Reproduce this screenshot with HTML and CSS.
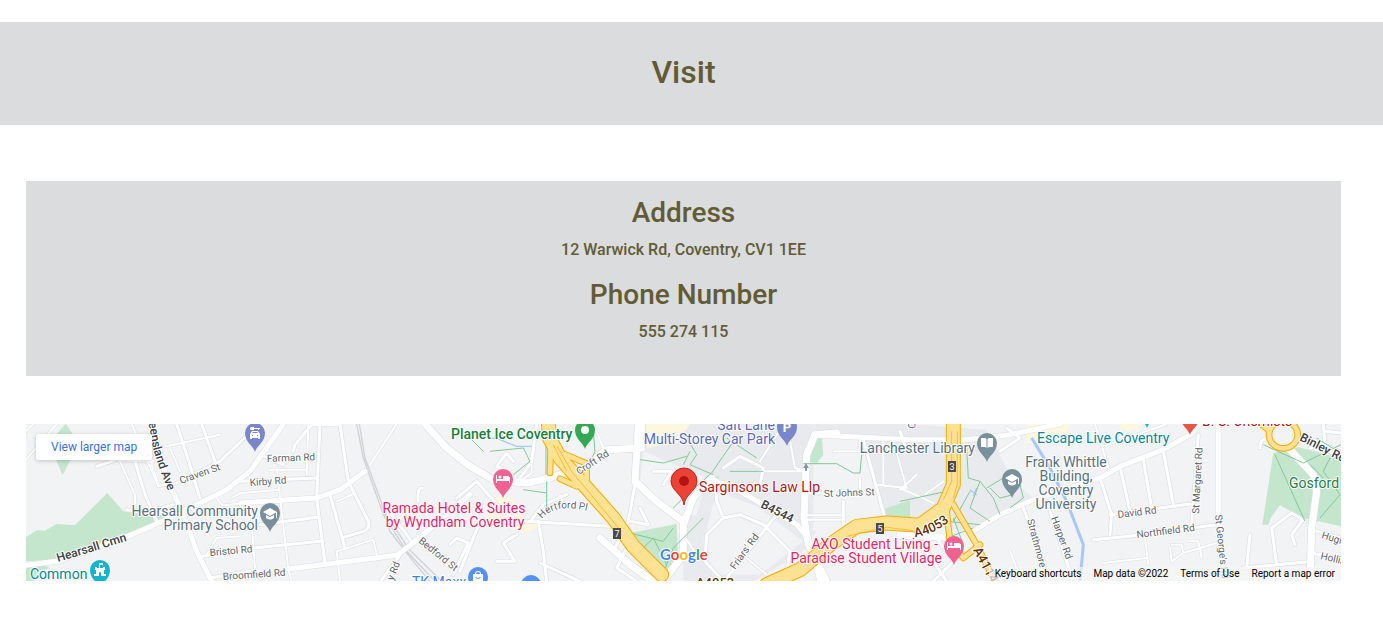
FILE: index.html
```html
<!DOCTYPE html>
<html lang="en">
<head>
<meta charset="utf-8">
<title>Visit</title>
<link rel="stylesheet" href="styles.css">
</head>
<body>
<header class="banner"><h1>Visit</h1></header>
<main class="content">
<section class="contact">
<h2>Address</h2>
<p>12 Warwick Rd, Coventry, CV1 1EE</p>
<h2>Phone Number</h2>
<p>555 274 115</p>
</section>
<section class="map" aria-label="Map">
<svg class="map-canvas" viewBox="0 0 1315 157" preserveAspectRatio="xMidYMid slice">
<defs>
<g id="thin">
<path d="M18 125L110 18M18 40L40 18M335 18L415 205M415 90L600 50M300 130L345 230V275M415 205L470 195M590 240L605 262L690 255M560 410L590 360L660 355M635 240L660 226M395 90V140L415 200M450 90L480 160"/>
<path d="M770 150L805 453L815 490M745 155H860M865 20L860 170M660 226L780 215M695 320L705 450M950 400L1060 365L1070 410M950 400L960 490M1050 140L1130 18M950 250L1000 228"/>
<path d="M1535 110V165L1500 190M1725 30L1750 90M1620 230L1630 260M2310 70L2325 150L2350 157M2220 130L2280 35M2360 292H2470M2360 305H2470M2570 200L2660 210L2620 70M2440 100H2520V65M2520 180V215M2590 65V200M2220 160H2350"/>
<path d="M2715 230L2770 190M2640 215L2690 170M2970 400L2990 450M3225 18L3270 165M3450 390L3455 430L3490 405L3590 375M3455 380H3485L3490 405M3505 370H3535L3545 420M3250 435L3380 420M3375 360L3385 440M2640 210L2740 255M1990 350L2030 410M2180 420L2240 470M3250 85L3440 18"/>
</g>
<g id="minor">
<path d="M345 130L375 230L410 310M320 275L380 285L460 260M230 145L290 125L400 130M470 18L500 110L540 240M545 18L585 130M470 195L600 130L690 45M550 415L690 385M570 480L690 460M660 190L890 180"/>
<path d="M900 18L890 240L915 435M820 100L825 80L875 20H960L985 190L1045 310Q1053 330 1030 340L970 358M930 230L975 390M720 110L790 140M720 320L890 298M700 390L900 370M1115 290L1175 370M1195 250Q1190 210 1207 210M1300 470L1345 375L1310 360L1290 380M1085 485L1140 412"/>
<path d="M1370 190L1440 270L1490 308L1770 325M1535 305L1570 260L1640 230M1370 190L1310 240M1555 310L1570 400L1580 490M1560 435L1680 490M1380 310L1320 460M1430 430L1485 430L1450 375L1490 350M1845 200L1825 310L1780 400M1900 160H1955L1930 200M1860 270L1885 320L1830 310M1820 390L1790 450L1850 490M1460 160L1430 145L1460 105L1480 130M1550 18L1535 130L1500 180"/>
<path d="M2120 480L2270 290M2085 190L2090 250L2110 300L2060 350L2055 430L2110 490M2110 300L2160 290L2230 320L2310 400L2300 460L2250 490M2110 150L2160 115L2230 150L2220 200M2470 320V250M2530 65L2592 290M2640 40L2660 95M2350 225H2410"/>
<path d="M3010 270L3070 430L3080 490M3090 280L3150 460M3240 180L3275 290L3270 350M3220 365L3330 355M3300 145L3330 280M3370 125L3395 270M3430 100L3460 260M3270 290L3510 258M3535 50L3515 320M3300 358L3590 320M3690 350L3680 450M3670 450L3880 430M3855 310L3815 285L3755 330L3770 440M3845 310L3815 350L3825 380M3875 335L3963 360M3875 405L3963 425M3910 18L3915 80L3870 90M3915 40L3963 45M3720 90Q3720 50 3760 70"/>
<path d="M2740 490L2800 430L2750 360M2720 400L2780 490M2940 100L3000 60L2960 30"/>
</g>
<g id="major">
<path d="M18 442L110 430L300 365L400 322L480 285L540 255L620 215L690 160L790 18M395 18L440 180L490 290L530 400L575 490M660 255L890 240L960 215L1035 160M805 453L1130 412L1180 375L1350 230"/>
<path d="M2080 185L2160 220L2240 265L2330 320L2365 360L2400 490M2380 50L2670 65L2840 65L2970 50L3120 18M2860 340L2940 290L3040 245L3240 180L3300 145L3430 95L3510 50L3540 18M3595 18V300L3615 490"/>
</g>
<g id="arterial">
<path d="M1215 18L1280 90L1350 145L1420 185L1520 195L1590 180L1700 140L1760 95L1865 90V18M1855 18L1845 190L1910 250L1990 310V410L1930 490M1990 320L2020 240L2075 180M2450 45L2385 50L2360 110L2352 300L2365 380L2420 490M3810 95L3880 170L3890 220L3875 330L3870 490M3830 50L3963 110M1740 360L1830 440L1900 490M2640 352L2780 358"/>
</g>
<g id="trunk"><path d="M1585 10L1588 60L1620 120L1700 210L1780 300L1840 385L1925 470M2240 500L2340 455L2430 380L2510 325L2600 315L2700 322L2770 270L2800 200V10"/></g>
<g id="ramp"><path d="M1592 90L1590 165M1625 105L1700 137L1700 200M1620 182L1670 205M2800 260L2870 380L2930 500M2780 280L2790 370L2830 420M2880 380L2830 420"/><ellipse cx="3790" cy="50" rx="43" ry="41"/><path d="M3700 0L3748 38"/></g>
<path id="queensland" d="M120-16L127 24Q134 48 146 76"/>
<path id="hertford" d="M516 95Q528 78 566 88"/>
<path id="ring-road" d="M889 113Q910 110 926 95"/>
<path id="pin" d="M0 19C-1.500 13-10 9-10 0A10 10 0 0 1 10 0C10 9 1.500 13 0 19Z"/>
<g id="cap"><path d="M-7-1L0-5L7-1L0 3ZM-4 2L0 4L4 2V5Q0 8-4 5Z"/><path d="M6-1H7V5H6Z"/></g>
<g id="bed"><path d="M-7-4H-6V1H6V-2Q6-3 5-3H0V0H-6V4H-7ZM6-2H7V4H6ZM-6 1H6V2H-6Z"/><circle cx="-3" cy="-2" r="1.500"/></g>
</defs>
<g transform="translate(-6 -6) scale(.33333)">
<path class="urban" d="M1870 18H2660L2900 35L2980 190L3040 240L2850 340L2660 310L2400 325L2350 400L2200 490H1990V320L1850 190Z"/>
<path class="base" d="M1870 100L2060 180L2030 290L1980 300L1860 190ZM2090 220L2210 265L2350 370L2220 470H2080L2050 370ZM2380 60H2520L2590 290L2470 320L2380 340Z"/>
<path class="sand" d="M1410 235L1480 240L1490 285L1575 320L1510 345L1400 305ZM1870 18H2010L1970 75L1880 90ZM3020 18H3150L3130 65L3020 75ZM3300 18H3370L3330 40L3300 35Z"/>
<path class="park" d="M18 430V358L50 337L75 338L110 318L165 322L262 225L310 280L420 290L450 300L300 365L110 425ZM85 75L137 18L178 75L128 170ZM18 445L65 440L90 450L55 460L40 489H18ZM1830 345L1970 318L1975 430L1930 465ZM2060 175L2100 175L2085 195L2055 195ZM2375 70L2405 55L2410 110L2390 137L2368 130ZM2595 272L2670 247V305L2600 300ZM3760 105L3835 88L3963 120V325L3850 300L3780 262L3752 300L3745 320H3727Z"/>
<path class="river" d="M3035 60L3090 150L3140 250L3190 380L3180 490"/>
<path class="stream" d="M1350 45L1440 65L1490 85L1540 85M2850 215L2870 230M2860 235L2870 210"/>
<path class="rail" d="M1010 18L1030 120L1090 290L1160 400L1245 490M1018 18L1035 120L1098 290L1168 395L1265 490M1085 260L1110 340L1180 430L1230 490"/>
<g class="casing"><use href="#thin" stroke-width="9"/><use href="#minor" stroke-width="13"/><use href="#major" stroke-width="18"/><use href="#arterial" stroke-width="25"/></g>
<g class="surface"><use href="#thin" stroke-width="6"/><use href="#minor" stroke-width="9"/><use href="#major" stroke-width="15"/><use href="#arterial" stroke-width="21"/></g>
<g class="paths"><path d="M1578 60L1578 170M1410 100L1510 90L1530 130L1480 170M1580 190V275M1720 40L1725 100L1710 135M1860 125L1930 135L2000 115M1960 270L1990 240L2075 165L2140 70M2000 60L2030 110L2010 140L2080 170M2010 100L1990 140M2120 60L2210 120M2130 160H2230M2350 137H2450L2500 165H2520L2525 110M1830 345L1930 370L1960 330M1870 390L1900 360L1940 440M1930 465L1960 390L2050 300M1350 60L1390 100M1510 215L1580 225"/><path d="M2840 90L2845 180L2880 190L2920 240L2940 290M2880 190L2850 270L2910 310M2900 210L2950 180L3000 200L3010 240L2970 270M2910 210L2940 240L2980 230M2640 250L2780 220M2780 310L2880 320M2780 360L2860 330M2800 300L2830 380M2850 220L2800 310M3730 80L3850 135L3963 80M3765 110L3855 310M3960 105L3890 60M3930 120L3910 160L3960 230L3900 300M3870 140L3910 180"/></g>
<g class="orange"><use href="#trunk" stroke-width="45"/><use href="#ramp" stroke-width="20"/></g>
<g class="yellow"><use href="#trunk" stroke-width="39"/><use href="#ramp" stroke-width="14"/></g>
<path class="lane" d="M1612 85L1655 160L1800 335M1600 80L1640 160M2480 355L2600 328L2680 338M2795 40V190L2770 245M2812 40V200L2800 240"/>
</g>
<g class="shield"><rect x="587" y="104" width="8" height="11"/><rect x="850" y="99" width="8" height="11"/><rect x="922" y="37" width="8" height="11"/><text x="591" y="113">7</text><text x="854" y="108">5</text><text x="926" y="46">3</text></g>
<g class="street">
<text class="strong"><textPath href="#queensland">Queensland Ave</textPath></text>
<text transform="translate(155 60) rotate(-20)">Craven St</text>
<text transform="translate(241 38) rotate(-2)">Farman Rd</text>
<text transform="translate(224 62) rotate(-4)">Kirby Rd</text>
<text transform="translate(32 138) rotate(-17)" class="strong">Hearsall Cmn</text>
<text transform="translate(184 132) rotate(-5)">Bristol Rd</text>
<text transform="translate(197 156) rotate(-4)">Broomfield Rd</text>
<text transform="translate(367 157) rotate(-68)">y Rd</text>
<text transform="translate(392 118) rotate(39)">Bedford St</text>
<text transform="translate(553 51) rotate(-33)">Croft Rd</text>
<text><textPath href="#hertford">Hertford Pl</textPath></text>
<text transform="translate(734 83) rotate(27)" class="strong">B4544</text>
<text transform="translate(709 146) rotate(-54)">Friars' Rd</text>
<text transform="translate(798 73) rotate(-2)">St Johns St</text>
<text transform="translate(889 5) rotate(-85)">C</text>
<text class="route"><textPath href="#ring-road">A4053</textPath></text>
<text transform="translate(947 126) rotate(62)" class="route">A4114</text>
<text x="670" y="163" class="route">A4053</text>
<text transform="translate(1001 96) rotate(75)">Strathmore</text>
<text transform="translate(1025 94) rotate(70)">Harper Rd</text>
<text transform="translate(1092 94) rotate(-7)">David Rd</text>
<text transform="translate(1111 114) rotate(-7)">Northfield Rd</text>
<text transform="translate(1173 90) rotate(-87)">St Margaret Rd</text>
<text transform="translate(1189 91) rotate(84)">St George's Rd</text>
<text transform="translate(1273 16) rotate(27)" class="strong">Binley Rd</text>
<text transform="translate(1295 114) rotate(17)">Hughes</text>
<text transform="translate(1294 135) rotate(13)">Hollis Rd</text>
</g>
<g class="place">
<text x="232" y="92" text-anchor="end" class="slate">Hearsall Community</text><text x="232" y="106" text-anchor="end" class="slate">Primary School</text>
<text x="4" y="155" class="teal">Common</text>
<text x="425" y="15" class="green">Planet Ice Coventry</text>
<text x="428" y="89" text-anchor="middle" class="pink">Ramada Hotel &amp; Suites</text><text x="429" y="103" text-anchor="middle" class="pink">by Wyndham Coventry</text>
<text x="386" y="163" class="blue">TK Maxx</text>
<text x="749" y="6" text-anchor="end" class="indigo">Salt Lane</text><text x="749" y="20" text-anchor="end" class="indigo">Multi-Storey Car Park</text>
<text x="673" y="68" class="red">Sarginsons Law Llp</text>
<text x="912" y="125" text-anchor="end" class="pink">AXO Student Living -</text><text x="916" y="139" text-anchor="end" class="pink">Paradise Student Village</text>
<text x="949" y="29" text-anchor="end" class="slate">Lanchester Library</text>
<text x="1011" y="19" class="teal">Escape Live Coventry</text>
<text x="1040" y="43" text-anchor="middle" class="slate">Frank Whittle</text><text x="1040" y="57" text-anchor="middle" class="slate">Building,</text><text x="1040" y="71" text-anchor="middle" class="slate">Coventry</text><text x="1040" y="85" text-anchor="middle" class="slate">University</text>
<text x="1176" y="2" class="red">B. S. Chemists</text>
<text x="1263" y="64" class="forest">Gosford</text>
</g>
<g fill="#fff">
<g transform="translate(229 9)"><use href="#pin" fill="#7986cb"/><path fill-rule="evenodd" d="M-5 1L-3-2H3L5 1V6H3V5H-3V6H-5ZM-3 0H3L2-1H-2ZM-3 2V3H-2V2ZM2 2V3H3V2ZM-5-5L-4-6H-1V-5H5V-4H4V-3H3V-4H-1V-3H-4L-5-4Z"/></g>
<g transform="translate(244 89)"><use href="#pin" fill="#78909c"/><use href="#cap"/></g>
<g transform="translate(477 55)"><use href="#pin" fill="#f06292"/><use href="#bed"/></g>
<g transform="translate(559 6)"><use href="#pin" fill="#34a853"/><circle r="4"/></g>
<g transform="translate(761 3)"><use href="#pin" fill="#7986cb"/><text class="glyph" y="5">P</text></g>
<g transform="translate(961 19)"><use href="#pin" fill="#78909c"/><path d="M-6-5H-2L-.5-4V5L-2 4H-6ZM6-5H2L.5-4V5L2 4H6Z"/></g>
<g transform="translate(986 55)"><use href="#pin" fill="#78909c"/><use href="#cap"/></g>
<g transform="translate(928 122)"><use href="#pin" fill="#f06292"/><use href="#bed"/></g>
<g transform="translate(74 146)"><use href="#pin" fill="#12b5cb"/><path d="M-5-3H-3V-2H-1V-7H3V-5H0V-2H3V-3H5V0H4V4H6V6H1V3Q0 1-1 3V6H-6V4H-4V0H-5Z"/></g>
<g transform="translate(452 153)"><use href="#pin" fill="#5491f5"/><path fill-rule="evenodd" d="M-5-3H-3Q-3-6 0-6T3-3H5V6H-5ZM-2-3H2Q2-5 0-5T-2-3ZM-3 0Q0 4 3 0H2Q0 2-2 0Z"/></g>
<g transform="translate(505 161)"><use href="#pin" fill="#5491f5"/><path d="M-4-2H4V5H-4Z"/></g>
<use href="#pin" transform="translate(1164 -8)" fill="#ea5548"/><use href="#pin" transform="translate(1121 -15)" fill="#12b5cb"/>
<path d="M658 81C657 70 645 67 645 57A13 13 0 0 1 671 57C671 67 659 70 658 81Z" fill="#ea4335" stroke="#c5221f"/><circle cx="658" cy="57" r="5" fill="#b31412"/>
<path d="M780 39L777 44H779V47H781V44H783Z" fill="#8799a5"/>
</g>
<text class="logo" x="634" y="136"><tspan fill="#4285f4">G</tspan><tspan fill="#ea4335">o</tspan><tspan fill="#fbbc04">o</tspan><tspan fill="#4285f4">g</tspan><tspan fill="#34a853">l</tspan><tspan fill="#ea4335">e</tspan></text>
</svg>
<a class="larger" href="#">View larger map</a>
<div class="credits"><button type="button">Keyboard shortcuts</button><span>Map data ©2022</span><a href="#">Terms of Use</a><a href="#">Report a map error</a></div>
</section>
</main>
</body>
</html>
```
FILE: styles.css
```css
body { margin: 0; background: #fff; color: #625b35; font-family: Roboto, sans-serif; }
h1, h2, p { margin: 0; font-weight: 500; text-align: center; }
.banner { margin-top: 22px; padding: 31px 16px 34px 0; background: #dadcde; }
h1 { font-size: 32px; line-height: 38px; }
.content { margin: 56px 42px 42px 26px; }
.contact { padding: 15px 0 34px; background: #dadcde; }
h2 { font-size: 28px; line-height: 34px; }
p { margin-top: 10px; font-size: 16px; line-height: 20px; }
p + h2 { margin-top: 18px; }
.map { position: relative; margin-top: 48px; overflow: hidden; background: #f1f3f4; }
.map-canvas { display: block; width: 100%; }
.urban { fill: #e8eaed; }
.base { fill: #f1f3f4; }
.sand { fill: #fef7e0; }
.park { fill: #c3e6cd; }
.paths { fill: none; stroke: #81c995; stroke-width: 3; }
.river { fill: none; stroke: #a8c7fa; stroke-width: 9; }
.stream { fill: none; stroke: #a8c7fa; stroke-width: 4; }
.rail { fill: none; stroke: #cfd2d6; stroke-width: 4; }
.lane { fill: none; stroke: #f9ab00; stroke-width: 2; }
.casing, .surface, .orange, .yellow { fill: none; stroke-linejoin: round; stroke-linecap: round; }
.casing { stroke: #dcdfe3; }
.surface { stroke: #fff; }
.orange { stroke: #f9ab00; }
.yellow { stroke: #fde293; }
.street text { fill: #5f6368; font-size: 10px; }
.street .strong { fill: #3c4043; font-size: 12px; font-weight: 500; }
.street .route { fill: #622f00; font-size: 13px; font-weight: 500; }
.street text, .place text, .logo { stroke: #fff; stroke-width: 2px; stroke-linejoin: round; paint-order: stroke; }
.place text { font-size: 14px; }
.place .slate { fill: #56707e; }
.place .teal { fill: #078691; }
.place .green { fill: #188038; font-weight: 500; }
.place .forest { fill: #238044; }
.place .pink { fill: #e91e63; }
.place .blue { fill: #3f7de8; }
.place .indigo { fill: #5968bd; }
.place .red { fill: #b31412; }
.shield rect { fill: #4a4a4a; }
.shield text { fill: #fff; font-size: 9px; text-anchor: middle; }
.glyph { font-size: 13px; font-weight: 700; text-anchor: middle; }
.logo { font: 700 15px Lato, sans-serif; }
.larger { position: absolute; top: 10px; left: 10px; padding: 5px 15px; border-radius: 2px; background: #fff; box-shadow: 0 1px 4px rgba(0, 0, 0, .2); color: #3871e0; font-size: 12px; line-height: 16px; text-decoration: none; }
.credits { position: absolute; right: 0; bottom: 0; display: flex; gap: 12px; padding: 0 6px; background: rgba(245, 245, 245, .7); color: #000; font-size: 10px; line-height: 14px; }
.credits button { padding: 0; border: 0; background: none; color: inherit; font: inherit; }
.credits a { color: inherit; text-decoration: none; }
```
